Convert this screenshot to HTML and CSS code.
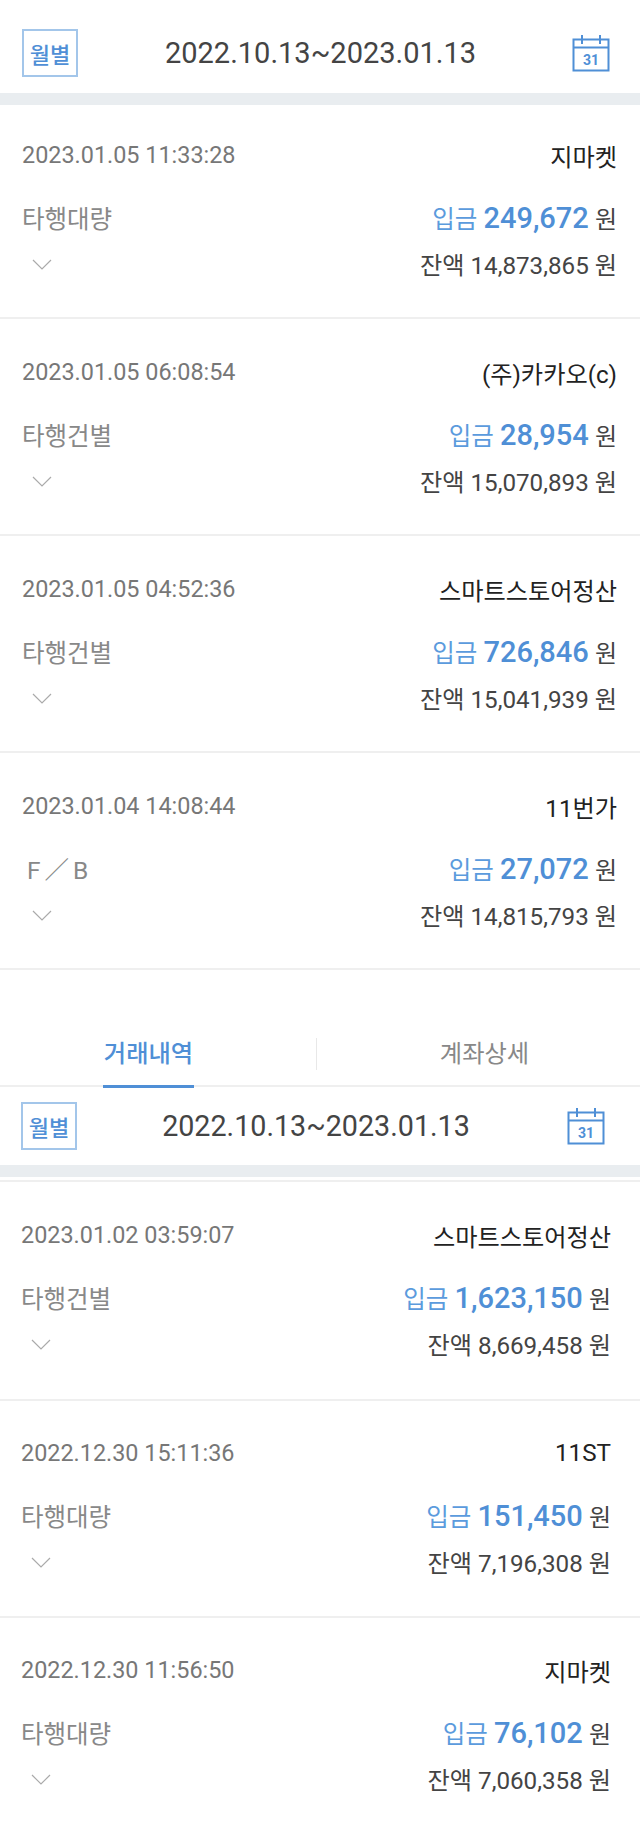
FILE: index.html
```html
<!DOCTYPE html>
<html lang="ko">
<head>
    <meta charset="UTF-8">
    <meta name="viewport" content="width=device-width, initial-scale=1.0">
    <title>거래내역</title>
    <link rel="stylesheet" href="styles.css">
</head>
<body>
    <section class="block">
        <div class="period">
            <span class="month-btn">월별</span>
            <span class="period-text">2022.10.13~2023.01.13</span>
            <svg class="cal-icon" viewBox="0 0 38 38" width="38" height="38">
                <path d="M1.5 5.5h35v31h-35zM1.5 13.5h35M10 1v9M28 1v9" fill="none" stroke="#4f8fd6" stroke-width="2"/>
                <text x="19" y="31" text-anchor="middle" class="cal-num">31</text>
            </svg>
        </div>
        <div class="band"></div>

        <div class="tx">
            <div class="tx-line tx-top"><span class="tx-time">2023.01.05 11:33:28</span><span class="tx-name">지마켓</span></div>
            <div class="tx-line tx-mid"><span class="tx-type">타행대량</span><span class="tx-amount">입금 <b>249,672</b> <i>원</i></span></div>
            <div class="tx-line tx-bot">
                <svg class="chev" viewBox="0 0 20 12" width="20" height="12"><path d="M1 1l9 9 9-9" fill="none" stroke="#aaa" stroke-width="1.2"/></svg>
                <span class="tx-balance">잔액 14,873,865 원</span>
            </div>
        </div>
        <div class="tx">
            <div class="tx-line tx-top"><span class="tx-time">2023.01.05 06:08:54</span><span class="tx-name">(주)카카오(c)</span></div>
            <div class="tx-line tx-mid"><span class="tx-type">타행건별</span><span class="tx-amount">입금 <b>28,954</b> <i>원</i></span></div>
            <div class="tx-line tx-bot">
                <svg class="chev" viewBox="0 0 20 12" width="20" height="12"><path d="M1 1l9 9 9-9" fill="none" stroke="#aaa" stroke-width="1.2"/></svg>
                <span class="tx-balance">잔액 15,070,893 원</span>
            </div>
        </div>
        <div class="tx">
            <div class="tx-line tx-top"><span class="tx-time">2023.01.05 04:52:36</span><span class="tx-name">스마트스토어정산</span></div>
            <div class="tx-line tx-mid"><span class="tx-type">타행건별</span><span class="tx-amount">입금 <b>726,846</b> <i>원</i></span></div>
            <div class="tx-line tx-bot">
                <svg class="chev" viewBox="0 0 20 12" width="20" height="12"><path d="M1 1l9 9 9-9" fill="none" stroke="#aaa" stroke-width="1.2"/></svg>
                <span class="tx-balance">잔액 15,041,939 원</span>
            </div>
        </div>
        <div class="tx">
            <div class="tx-line tx-top"><span class="tx-time">2023.01.04 14:08:44</span><span class="tx-name">11번가</span></div>
            <div class="tx-line tx-mid"><span class="tx-type tx-type-fb">F／B</span><span class="tx-amount">입금 <b>27,072</b> <i>원</i></span></div>
            <div class="tx-line tx-bot">
                <svg class="chev" viewBox="0 0 20 12" width="20" height="12"><path d="M1 1l9 9 9-9" fill="none" stroke="#aaa" stroke-width="1.2"/></svg>
                <span class="tx-balance">잔액 14,815,793 원</span>
            </div>
        </div>
    </section>

    <nav class="tabs">
        <div class="tab tab-active"><span>거래내역</span></div>
        <div class="tab"><span>계좌상세</span></div>
    </nav>

    <section class="block block-second">
        <div class="period">
            <span class="month-btn">월별</span>
            <span class="period-text">2022.10.13~2023.01.13</span>
            <svg class="cal-icon" viewBox="0 0 38 38" width="38" height="38">
                <path d="M1.5 5.5h35v31h-35zM1.5 13.5h35M10 1v9M28 1v9" fill="none" stroke="#4f8fd6" stroke-width="2"/>
                <text x="19" y="31" text-anchor="middle" class="cal-num">31</text>
            </svg>
        </div>
        <div class="band"></div>
        <div class="band-line"></div>

        <div class="tx">
            <div class="tx-line tx-top"><span class="tx-time">2023.01.02 03:59:07</span><span class="tx-name">스마트스토어정산</span></div>
            <div class="tx-line tx-mid"><span class="tx-type">타행건별</span><span class="tx-amount">입금 <b>1,623,150</b> <i>원</i></span></div>
            <div class="tx-line tx-bot">
                <svg class="chev" viewBox="0 0 20 12" width="20" height="12"><path d="M1 1l9 9 9-9" fill="none" stroke="#aaa" stroke-width="1.2"/></svg>
                <span class="tx-balance">잔액 8,669,458 원</span>
            </div>
        </div>
        <div class="tx">
            <div class="tx-line tx-top"><span class="tx-time">2022.12.30 15:11:36</span><span class="tx-name">11ST</span></div>
            <div class="tx-line tx-mid"><span class="tx-type">타행대량</span><span class="tx-amount">입금 <b>151,450</b> <i>원</i></span></div>
            <div class="tx-line tx-bot">
                <svg class="chev" viewBox="0 0 20 12" width="20" height="12"><path d="M1 1l9 9 9-9" fill="none" stroke="#aaa" stroke-width="1.2"/></svg>
                <span class="tx-balance">잔액 7,196,308 원</span>
            </div>
        </div>
        <div class="tx tx-last">
            <div class="tx-line tx-top"><span class="tx-time">2022.12.30 11:56:50</span><span class="tx-name">지마켓</span></div>
            <div class="tx-line tx-mid"><span class="tx-type">타행대량</span><span class="tx-amount">입금 <b>76,102</b> <i>원</i></span></div>
            <div class="tx-line tx-bot">
                <svg class="chev" viewBox="0 0 20 12" width="20" height="12"><path d="M1 1l9 9 9-9" fill="none" stroke="#aaa" stroke-width="1.2"/></svg>
                <span class="tx-balance">잔액 7,060,358 원</span>
            </div>
        </div>
    </section>
</body>
</html>
```

FILE: styles.css
```css
body {
    margin: 0;
    background-color: #fff;
    font-family: Roboto, "Noto Sans CJK KR", sans-serif;
    color: #333;
    overflow: hidden;
}
.period {
    height: 93px;
    padding: 13px 22px 0;
    display: flex;
    align-items: center;
    justify-content: space-between;
    box-sizing: border-box;
}
.month-btn {
    width: 56px;
    height: 48px;
    box-sizing: border-box;
    border: 2px solid #a3c6ea;
    color: #4f8fd6;
    font-size: 22px;
    font-weight: 500;
    display: flex;
    align-items: center;
    justify-content: center;
}
.period-text {
    font-size: 29px;
    color: #444;
    margin-right: 9px;
}
.cal-icon {
    margin-right: 8px;
}
.cal-num {
    font-size: 14px;
    font-weight: 700;
    fill: #4f8fd6;
}
.band {
    height: 12px;
    background-color: #e9edf0;
}
.tx {
    height: 217px;
    box-sizing: border-box;
    padding: 0 23px 0 22px;
    border-bottom: 2px solid #efefef;
}
.tx-line {
    display: flex;
    justify-content: space-between;
    align-items: center;
}
.tx-top {
    padding-top: 41px;
    height: 24px;
    box-sizing: content-box;
}
.band + .tx {
    height: 214px;
}
.band + .tx .tx-top {
    padding-top: 38px;
}
.tx-mid {
    margin-top: 30px;
    height: 40px;
}
.tx-bot {
    margin-top: 6px;
    height: 40px;
}
.tx-time {
    font-size: 23.4px;
    color: #777;
}
.tx-name {
    font-size: 24.2px;
    color: #222;
}
.tx-type {
    font-size: 24.5px;
    color: #888;
}
.tx-type-fb {
    padding-left: 5px;
    letter-spacing: 4px;
}
.tx-amount {
    font-size: 24.5px;
    color: #5b9bdd;
}
.tx-amount b {
    font-size: 29px;
    font-weight: 500;
    color: #4f8fd6;
}
.tx-amount i {
    font-style: normal;
    font-size: 24px;
    color: #444;
}
.tx-balance {
    font-size: 24.2px;
    color: #444;
}
.chev {
    margin-left: 10px;
    margin-top: 3px;
}
.tabs {
    height: 117px;
    box-sizing: border-box;
    padding-top: 68px;
    border-bottom: 2px solid #efefef;
    display: flex;
}
.tab {
    flex: 1;
    display: flex;
    justify-content: center;
    padding-left: 12px;
    font-size: 24.3px;
    color: #888;
}
.tab:first-child {
    flex: none;
    width: 317px;
    box-sizing: border-box;
    padding: 0 19px 0 0;
    border-right: 1px solid #e8e8e8;
    height: 32px;
}
.tab span {
    display: block;
    padding: 0 1px;
    height: 50px;
    box-sizing: border-box;
    line-height: 32px;
}
.tab-active span {
    color: #4f8fd6;
    font-weight: 500;
    border-bottom: 3px solid #4f8fd6;
}
.block-second .period {
    height: 78px;
    padding: 0 22px 0 21px;
}
.block-second .period-text {
    font-size: 28.7px;
    margin-right: 12px;
}
.block-second .cal-icon {
    margin-right: 13px;
}
.band-line {
    height: 2px;
    margin-top: 3px;
    background-color: #efefef;
}
.block-second .tx {
    padding-right: 29px;
    padding-left: 21px;
}
.block-second .tx-top {
    padding-top: 40px;
}
.block-second .band-line + .tx {
    height: 219px;
}
.block-second .band-line + .tx .tx-top {
    padding-top: 41px;
}
.tx-last {
    border-bottom: none;
}
```
